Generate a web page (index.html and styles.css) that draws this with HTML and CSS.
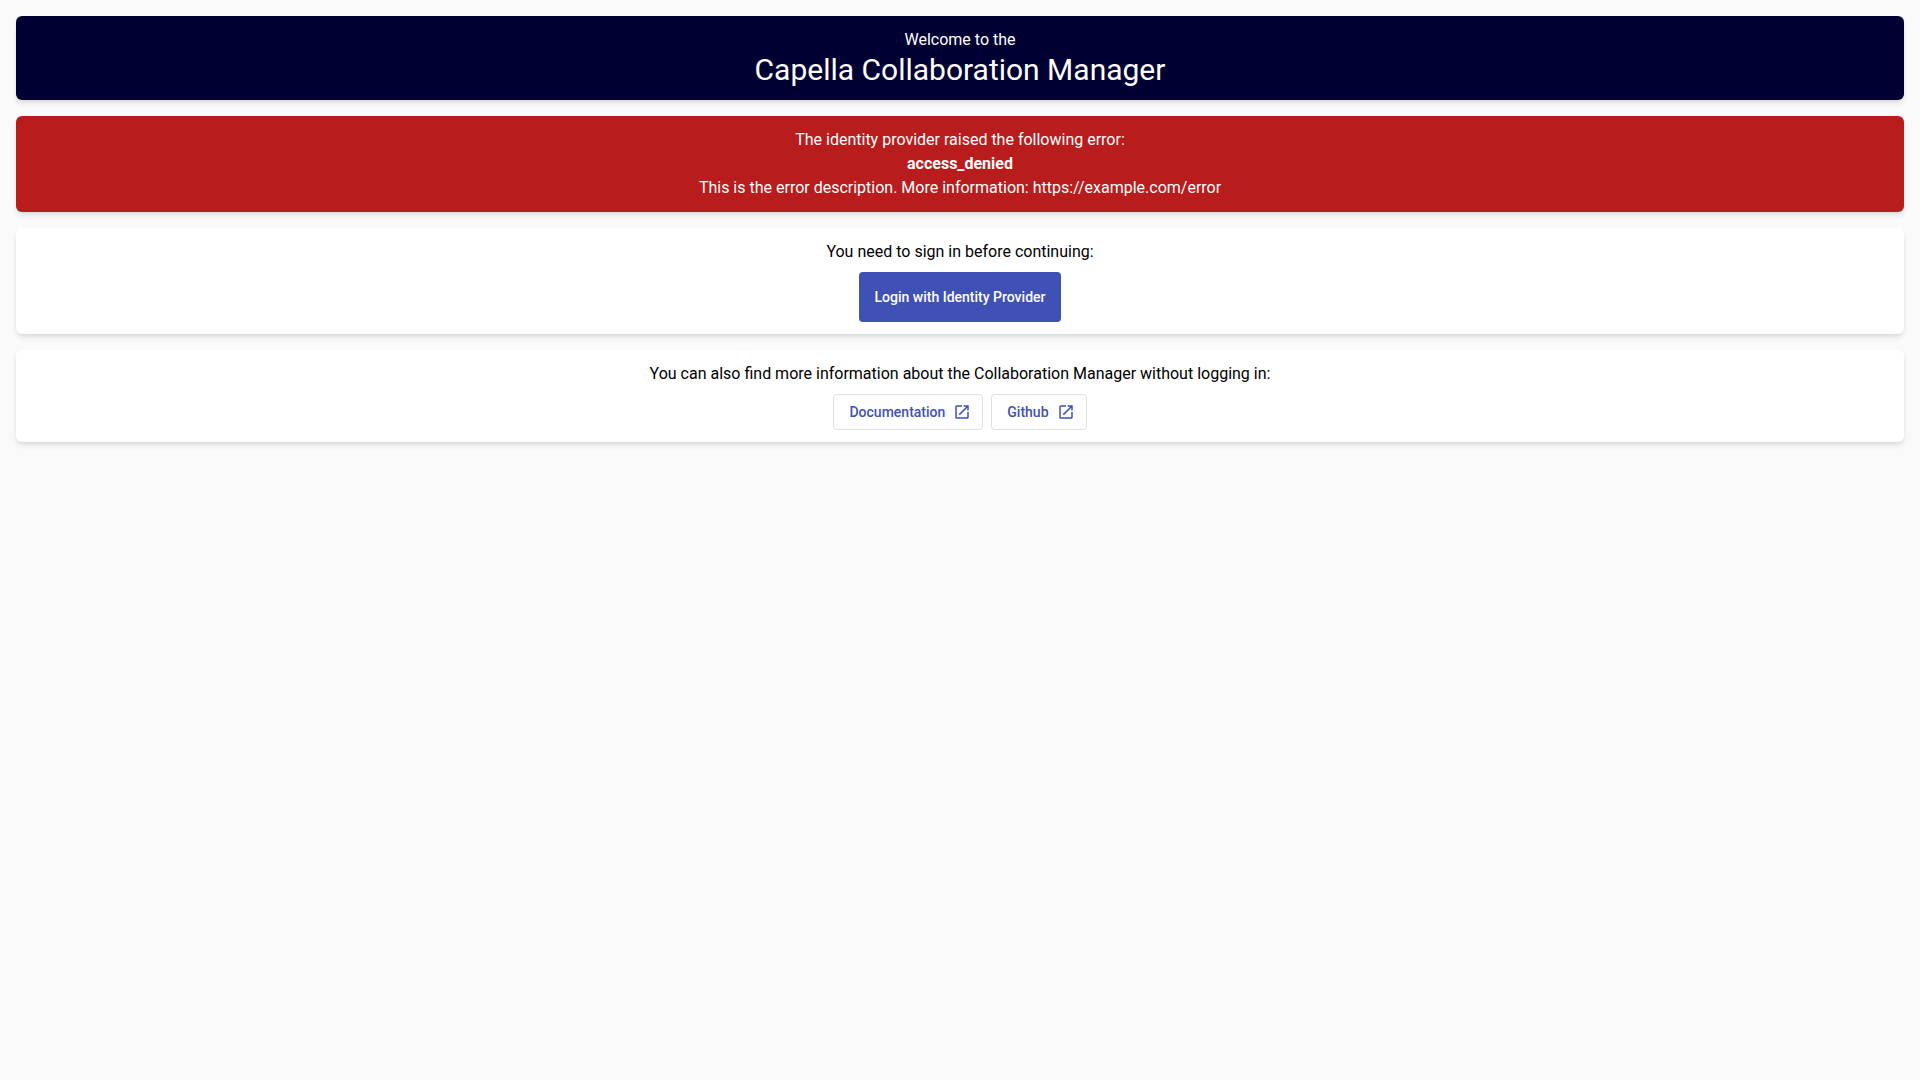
FILE: index.html
```html
<!DOCTYPE html>
<html lang="en">
<head>
<meta charset="utf-8">
<meta name="viewport" content="width=device-width, initial-scale=1">
<title>Capella Collaboration Manager</title>
<link rel="stylesheet" href="styles.css">
</head>
<body>
<main class="page">
  <header class="card card-primary">
    <p>Welcome to the</p>
    <h1 class="title">Capella Collaboration Manager</h1>
  </header>
  <section class="card card-error" role="alert">
    <p>The identity provider raised the following error:</p>
    <p><strong class="error-code">access_denied</strong></p>
    <p>This is the error description. More information: https://example.com/error</p>
  </section>
  <section class="card">
    <p>You need to sign in before continuing:</p>
    <div class="actions">
      <button type="button" class="button button-raised">Login with Identity Provider</button>
    </div>
  </section>
  <section class="card">
    <p>You can also find more information about the Collaboration Manager without logging in:</p>
    <div class="actions">
      <a class="button button-stroked" href="#documentation">Documentation
        <svg class="icon" viewBox="0 0 24 24" aria-hidden="true"><path d="M19 19H5V5h7V3H5a2 2 0 0 0-2 2v14a2 2 0 0 0 2 2h14c1.100 0 2-.9 2-2v-7h-2v7zM14 3v2h3.590l-9.830 9.830 1.410 1.410L19 6.410V10h2V3h-7z"/></svg>
      </a>
      <a class="button button-stroked" href="#github">Github
        <svg class="icon" viewBox="0 0 24 24" aria-hidden="true"><path d="M19 19H5V5h7V3H5a2 2 0 0 0-2 2v14a2 2 0 0 0 2 2h14c1.100 0 2-.9 2-2v-7h-2v7zM14 3v2h3.590l-9.830 9.830 1.410 1.410L19 6.410V10h2V3h-7z"/></svg>
      </a>
    </div>
  </section>
</main>
</body>
</html>
```
FILE: styles.css
```css
* {
  box-sizing: border-box;
}

body {
  margin: 0;
  background: #fafafa;
  color: #000;
  font-family: Roboto, sans-serif;
  font-size: 16px;
  line-height: 24px;
}

p,
h1 {
  margin: 0;
}

.page {
  display: flex;
  flex-direction: column;
  gap: 16px;
  padding: 16px;
}

.card {
  padding: 12px;
  border-radius: 6px;
  background: #fff;
  box-shadow: 0 4px 6px -1px rgba(0, 0, 0, 0.1), 0 2px 4px -2px rgba(0, 0, 0, 0.1);
  text-align: center;
}

.card-primary {
  background: #000033;
  color: #fff;
}

.card-error {
  background: #b91c1c;
  color: #fff;
}

.title {
  font-size: 30px;
  font-weight: 400;
  line-height: 36px;
}

.error-code {
  font-weight: 700;
}

.actions {
  display: flex;
  flex-wrap: wrap;
  justify-content: center;
  gap: 8px;
  margin-top: 8px;
}

.button {
  display: inline-flex;
  align-items: center;
  gap: 8px;
  border-radius: 4px;
  font-family: inherit;
  font-size: 14px;
  font-weight: 500;
  text-decoration: none;
  cursor: pointer;
}

.button-raised {
  height: 50px;
  padding: 0 16px;
  border: 0;
  background: #3f51b5;
  color: #fff;
}

.button-stroked {
  height: 36px;
  padding: 0 11px 0 15px;
  border: 1px solid #e0e0e0;
  color: #3f51b5;
}

.icon {
  width: 18px;
  height: 18px;
  fill: currentColor;
}
```
